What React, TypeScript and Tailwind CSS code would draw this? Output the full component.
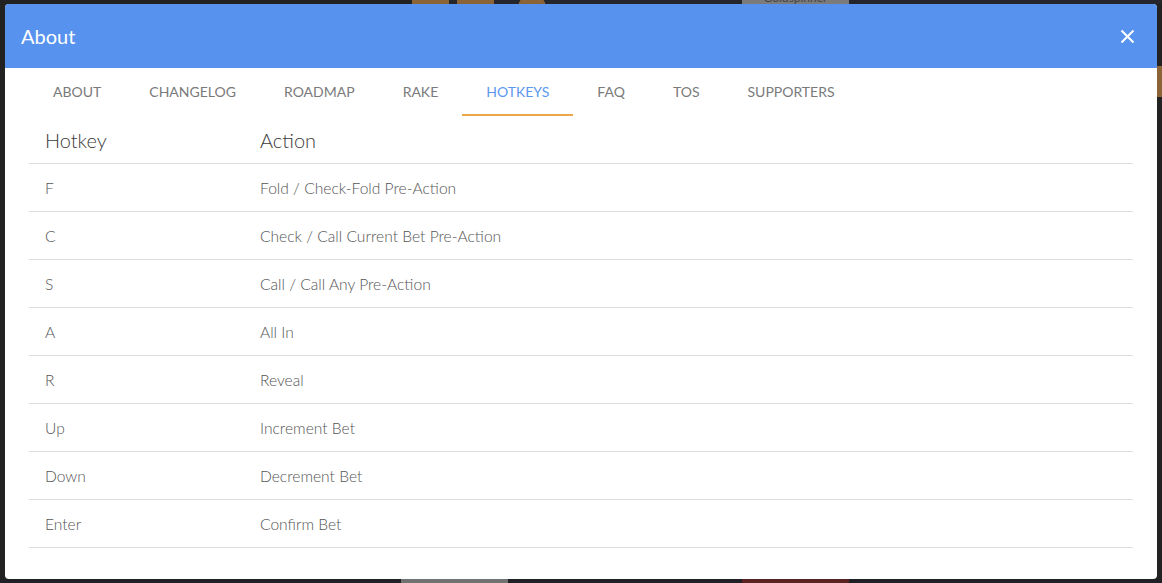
import React from "react";

const tabs = ["About", "Changelog", "Roadmap", "Rake", "Hotkeys", "FAQ", "TOS", "Supporters"];

const hotkeys: [string, string][] = [
  ["F", "Fold / Check-Fold Pre-Action"],
  ["C", "Check / Call Current Bet Pre-Action"],
  ["S", "Call / Call Any Pre-Action"],
  ["A", "All In"],
  ["R", "Reveal"],
  ["Up", "Increment Bet"],
  ["Down", "Decrement Bet"],
  ["Enter", "Confirm Bet"],
];

function CloseIcon() {
  return (
    <svg width="15" height="15" viewBox="0 0 15 15" fill="none" stroke="white" strokeWidth="2">
      <path d="M1.5 1.5 L13.5 13.5 M13.5 1.5 L1.5 13.5" />
    </svg>
  );
}

export default function App() {
  return (
    <div
      className="flex h-[583px] w-full flex-col overflow-hidden bg-[#222222]"
      style={{ fontFamily: "Lato, 'Open Sans', sans-serif" }}
    >
      {/* strip of the game table above the dialog */}
      <div className="flex h-[4px] shrink-0 overflow-hidden bg-[#24262c]">
        <div className="w-[412px] shrink-0 bg-[#222222]" />
        <div className="w-[37px] shrink-0 bg-[#8a6436]" />
        <div className="w-[8px] shrink-0" />
        <div className="w-[37px] shrink-0 bg-[#8a6436]" />
        <div className="w-[24px] shrink-0" />
        <div className="h-[4px] w-[28px] shrink-0 overflow-hidden">
          <div className="mt-[-6px] h-[28px] w-[28px] rounded-full bg-[#8a6436]" />
        </div>
        <div className="w-[196px] shrink-0" />
        <div className="flex w-[107px] shrink-0 items-end justify-center overflow-hidden bg-[#7b7b7b]">
          <span className="shrink-0 text-[12px] leading-[12px] text-[#444]">Goldspinner</span>
        </div>
      </div>

      <div className="flex h-[575px] shrink-0">
        <div className="w-[5px] shrink-0" />

        <div className="flex w-[1152px] shrink-0 flex-col overflow-hidden rounded-[4px] bg-white">
          <div className="flex h-[64px] shrink-0 items-center justify-between bg-[#5793ee] pl-[16px] pr-[22px]">
            <span className="text-[20px] text-white">About</span>
            <CloseIcon />
          </div>

          <div className="flex h-[48px] shrink-0 px-[24px]">
            {tabs.map((t) => {
              const active = t === "Hotkeys";
              return (
                <div
                  key={t}
                  className={
                    active
                      ? "flex items-center border-b-2 border-[#eba64a] px-[24px] text-[14px] uppercase text-[#5b97ee]"
                      : "flex items-center border-b-2 border-transparent px-[24px] text-[14px] uppercase text-[#7a7a7a]"
                  }
                >
                  {t}
                </div>
              );
            })}
          </div>

          <div className="mx-[24px]">
            <div className="grid h-[48px] grid-cols-[215px_1fr] items-center border-b border-[#dedede] pt-[1px] text-[20px] font-light text-[#3a3a3a]">
              <div className="px-[16px]">Hotkey</div>
              <div className="px-[16px]">Action</div>
            </div>
            {hotkeys.map(([key, action]) => (
              <div
                key={key}
                className="grid h-[48px] grid-cols-[215px_1fr] items-center border-b border-[#dedede] pt-[2px] text-[15.6px] font-light text-[#555]"
              >
                <div className="px-[16px]">{key}</div>
                <div className="px-[16px]">{action}</div>
              </div>
            ))}
          </div>
        </div>

        <div className="flex w-[5px] shrink-0 flex-col">
          <div className="mt-[62px] h-[31px] bg-[#8a6436]" />
        </div>
      </div>

      {/* strip of the game table below the dialog */}
      <div className="flex h-[4px] shrink-0 bg-[#1f2025]">
        <div className="w-[401px] shrink-0" />
        <div className="w-[107px] shrink-0 bg-[#727272]" />
        <div className="w-[234px] shrink-0" />
        <div className="w-[107px] shrink-0 bg-[#5a2220]" />
      </div>
    </div>
  );
}
